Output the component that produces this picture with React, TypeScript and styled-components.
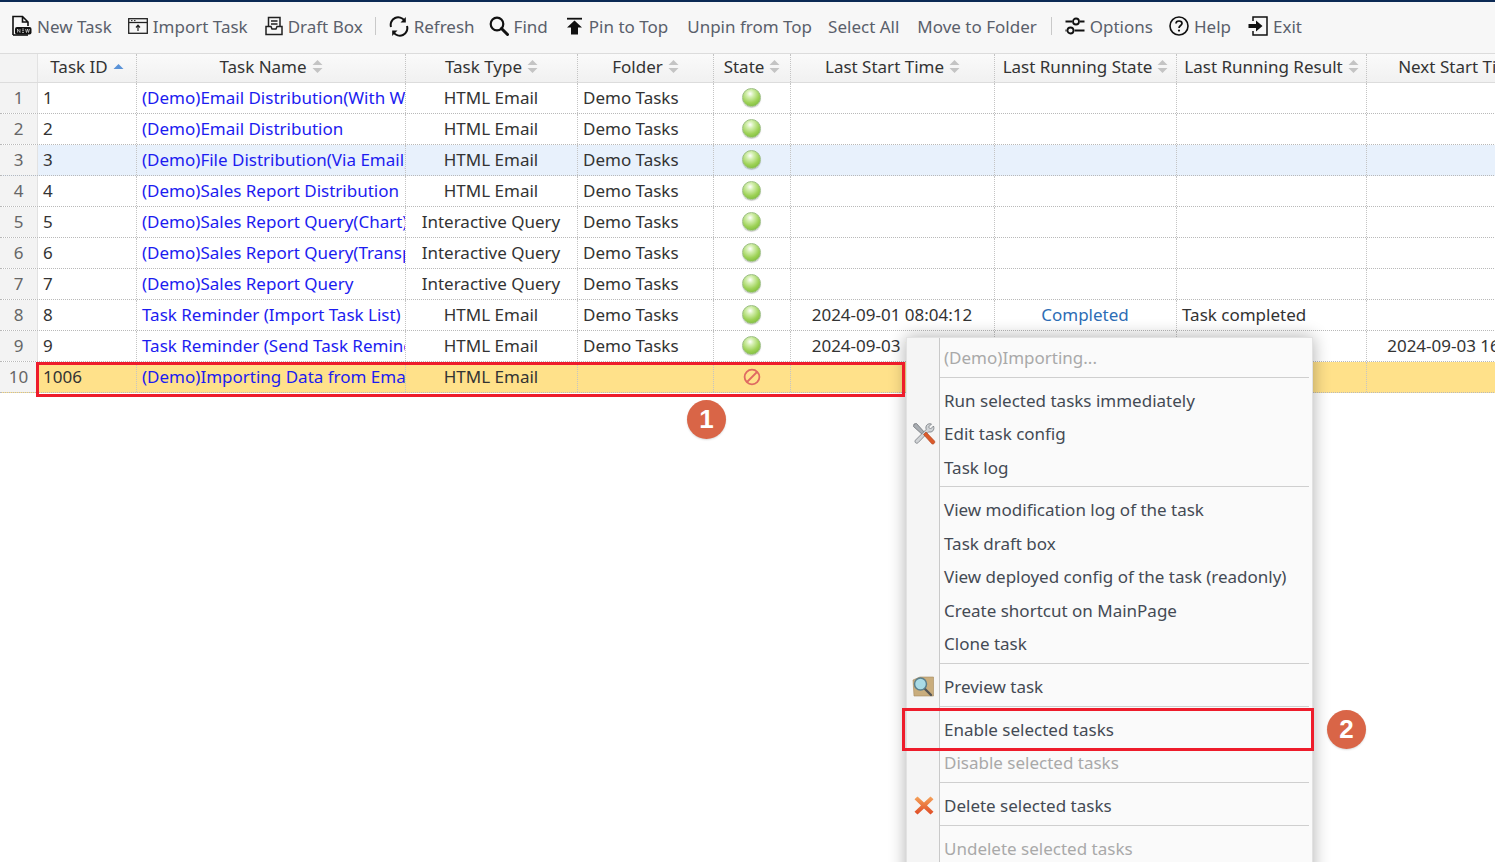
import React from 'react'
import styled, { createGlobalStyle } from 'styled-components'

const GlobalStyle = createGlobalStyle`
  html, body {
    margin: 0;
    padding: 0;
    overflow: hidden;
    background: #fff;
    font-family: "Noto Sans", "Open Sans", sans-serif;
  }
`

const COLUMNS = '38px 99px 269px 172px 136px 77px 204px 182px 190px 203px'

const Page = styled.div`
  position: relative;
  width: 1495px;
  height: 862px;
  overflow: hidden;
  border-top: 2px solid #0c2a55;
  box-sizing: border-box;
`

const Toolbar = styled.div`
  display: flex;
  align-items: center;
  height: 52px;
  padding: 0 0 3px 11px;
  background: #f7f7f7;
  border-bottom: 1px solid #dcdcdc;
  box-sizing: border-box;
`

const ToolButton = styled.div<{ $gap?: number }>`
  display: flex;
  align-items: center;
  gap: 5px;
  margin-right: ${p => p.$gap ?? 17}px;
  font-size: 17px;
  color: #5a606b;
  white-space: nowrap;
  svg {
    display: block;
    flex: none;
  }
`

const ToolDivider = styled.div`
  width: 1px;
  height: 18px;
  background: #c9c9c9;
  margin-right: 13px;
`

const Row = styled.div<{ $bg?: string }>`
  display: grid;
  grid-template-columns: ${COLUMNS};
  width: 1570px;
  height: 31px;
  box-sizing: border-box;
  border-bottom: 1px dotted #b9b9b9;
  background: ${p => p.$bg ?? '#fff'};
  font-size: 17px;
  color: #333;
`

const HeadRow = styled(Row)`
  height: 29px;
  background: linear-gradient(#fafafa, #f1f1f1);
  border-bottom: 1px solid #dcdcdc;
`

const HeadCell = styled.div`
  display: flex;
  align-items: center;
  justify-content: center;
  gap: 5px;
  padding-bottom: 3px;
  border-right: 1px dotted #c4c4c4;
  white-space: nowrap;
  overflow: hidden;
`

const NumCell = styled.div`
  display: flex;
  align-items: center;
  justify-content: center;
  padding-bottom: 2px;
  background: #f3f3f3;
  color: #666;
  border-right: 1px solid #e2e2e2;
`

const Cell = styled.div<{ $center?: boolean; $link?: boolean }>`
  display: flex;
  align-items: center;
  justify-content: ${p => (p.$center ? 'center' : 'flex-start')};
  padding: ${p => (p.$center ? '0 1px 2px 0' : '0 0 2px 5px')};
  border-right: 1px dotted #c4c4c4;
  color: ${p => (p.$link ? '#1c1cf0' : 'inherit')};
  white-space: nowrap;
  overflow: hidden;
  svg {
    margin-top: 2px;
  }
`

const StateLabel = styled.span`
  color: #2d6db5;
`

const GreenDot = styled.span`
  display: block;
  width: 19px;
  height: 19px;
  box-sizing: border-box;
  border-radius: 50%;
  border: 1px solid #9cbf83;
  background: radial-gradient(circle at 42% 28%, #ffffff 0%, #d4efb0 22%, #9ed257 58%, #6eb02f 100%);
  box-shadow: 0 1px 1px rgba(0, 0, 0, 0.2);
`

const Menu = styled.div`
  position: absolute;
  left: 906px;
  top: 335px;
  width: 407px;
  height: 600px;
  padding-top: 2.6px;
  box-sizing: border-box;
  background: linear-gradient(90deg, #f5f5f5 0, #f5f5f5 32px, #c9c9c9 32px, #c9c9c9 33px, #fafafa 33px);
  border: 1px solid #e2e2e2;
  box-shadow: 0 0 16px rgba(0, 0, 0, 0.32);
`

const MenuItem = styled.div<{ $off?: boolean }>`
  display: flex;
  align-items: center;
  height: 33.5px;
  font-size: 17px;
  color: ${p => (p.$off ? '#a9a9a9' : '#444a54')};
  white-space: nowrap;
`

const MenuIcon = styled.span`
  display: flex;
  align-items: center;
  justify-content: center;
  width: 33px;
  margin-right: 4px;
  flex: none;
`

const MenuLine = styled.div`
  height: 1px;
  margin: 2.5px 3px 5.75px 33px;
  background: #cfcfcf;
`

const Frame = styled.div<{ $x: number; $y: number; $w: number; $h: number }>`
  position: absolute;
  left: ${p => p.$x}px;
  top: ${p => p.$y}px;
  width: ${p => p.$w}px;
  height: ${p => p.$h}px;
  box-sizing: border-box;
  border: 3px solid #ee1c2b;
`

const Badge = styled.div<{ $x: number; $y: number }>`
  position: absolute;
  left: ${p => p.$x}px;
  top: ${p => p.$y}px;
  width: 39px;
  height: 39px;
  border-radius: 50%;
  background: #d96547;
  color: #fff;
  font-size: 26px;
  font-weight: 700;
  font-family: "Liberation Sans", sans-serif;
  display: flex;
  align-items: center;
  justify-content: center;
  box-shadow: 0 1px 2px rgba(0, 0, 0, 0.15);
`

const SortArrows = ({ up }: { up?: boolean }) =>
  up ? (
    <svg width="11" height="12" viewBox="0 0 11 12">
      <path d="M0.5 8 L5.5 3 L10.5 8 Z" fill="#5b93d8" />
    </svg>
  ) : (
    <svg width="11" height="15" viewBox="0 0 11 15">
      <path d="M0.5 6 L5.5 1 L10.5 6 Z M0.5 9 L5.5 14 L10.5 9 Z" fill="#c4c4c4" />
    </svg>
  )

const NewIcon = () => (
  <svg width="21" height="22" viewBox="0 0 21 22" fill="none">
    <path d="M2 20 V1.5 H11.5 L17 7 V11 M11.5 1.5 V7 H17" stroke="#111" strokeWidth="1.6" />
    <path d="M2 20 H17" stroke="#111" strokeWidth="1.6" />
    <rect x="4" y="12" width="16.5" height="7.5" rx="2" fill="#111" />
    <path d="M6.5 14 V17.5 M6.5 14 L9 17.5 V14 M11 14 H13 M11 15.7 H13 M11 17.5 H13 M14.5 14 L15.5 17.5 L16.5 14 L17.5 17.5 L18.5 14" stroke="#fff" strokeWidth="0.6" />
  </svg>
)

const ImportIcon = () => (
  <svg width="20" height="18" viewBox="0 0 20 18" fill="none">
    <rect x="0.7" y="1.7" width="18.6" height="14.6" stroke="#222" strokeWidth="1.3" />
    <path d="M1 5.5 H19" stroke="#222" strokeWidth="1.3" />
    <path d="M3 3.6 H4.5 M6 3.6 H7.5" stroke="#222" strokeWidth="1" />
    <path d="M10 14 V8.5 M8 10.5 L10 8.2 L12 10.5" stroke="#222" strokeWidth="1.2" />
  </svg>
)

const DraftIcon = () => (
  <svg width="18" height="20" viewBox="0 0 18 20" fill="none">
    <path d="M3.5 10 V1.5 H15 V10" stroke="#222" strokeWidth="1.5" />
    <path d="M6 5 H12.5 M6 8 H12.5" stroke="#222" strokeWidth="1.4" />
    <path d="M1 10.5 H6 L7 13 H11 L12 10.5 H17 V18.5 H1 Z" stroke="#222" strokeWidth="1.5" />
  </svg>
)

const RefreshIcon = () => (
  <svg width="20" height="21" viewBox="0 0 20 21" fill="none">
    <path d="M2 11 A7.5 7.5 0 0 1 15.5 4.8" stroke="#111" strokeWidth="2" />
    <path d="M18 10 A7.5 7.5 0 0 1 4.5 16.2" stroke="#111" strokeWidth="2" />
    <path d="M16.8 1 V6.6 H11.5 Z" fill="#111" />
    <path d="M3.2 20 V14.4 H8.5 Z" fill="#111" />
  </svg>
)

const FindIcon = () => (
  <svg width="20" height="20" viewBox="0 0 20 20" fill="none">
    <circle cx="8" cy="8" r="6.3" stroke="#111" strokeWidth="2.2" />
    <path d="M12.5 12.5 L18.5 18.5" stroke="#111" strokeWidth="3" strokeLinecap="round" />
  </svg>
)

const PinIcon = () => (
  <svg width="18" height="18" viewBox="0 0 18 18">
    <path d="M1 0.8 H16 V2.6 H1 Z" fill="#111" />
    <path d="M8.5 3.6 L16 10.4 H12 V17.5 H5 V10.4 H1 Z" fill="#111" />
  </svg>
)

const OptionsIcon = () => (
  <svg width="20" height="18" viewBox="0 0 20 18" fill="none">
    <path d="M0.5 4.5 H7 M15 4.5 H19.5 M0.5 13.5 H1.5 M9.5 13.5 H19.5" stroke="#111" strokeWidth="1.8" />
    <circle cx="11" cy="4.5" r="3" stroke="#111" strokeWidth="1.8" />
    <circle cx="5.5" cy="13.5" r="3" stroke="#111" strokeWidth="1.8" />
  </svg>
)

const HelpIcon = () => (
  <svg width="20" height="20" viewBox="0 0 20 20" fill="none">
    <circle cx="10" cy="10" r="9" stroke="#111" strokeWidth="1.6" />
    <path d="M7 7.6 C7 5.8 8.4 5 10 5 C11.7 5 13 6 13 7.4 C13 9.4 10 9.6 10 12" stroke="#111" strokeWidth="1.7" />
    <circle cx="10" cy="14.6" r="1.1" fill="#111" />
  </svg>
)

const ExitIcon = () => (
  <svg width="20" height="20" viewBox="0 0 20 20" fill="none">
    <path d="M5 5 V1 H19 V19 H5 V15" stroke="#111" strokeWidth="1.5" />
    <path d="M0.5 8 H8 V4.5 L14.5 10 L8 15.5 V12 H0.5 Z" fill="#111" />
  </svg>
)

const ForbidIcon = () => (
  <svg width="18" height="18" viewBox="0 0 18 18" fill="none">
    <circle cx="9" cy="9" r="7.4" stroke="#df6a62" strokeWidth="1.8" />
    <path d="M4 14 L14 4" stroke="#df6a62" strokeWidth="1.8" />
  </svg>
)

const ToolsIcon = () => (
  <svg width="24" height="24" viewBox="0 0 24 24" fill="none">
    <path d="M2 2 L4.5 1.5 L14 12 L12 14 L1.5 4.5 Z" fill="#a9adb2" stroke="#6d7176" strokeWidth="0.8" />
    <path d="M21.5 4 L18.5 7 L16.5 5 L19.5 2 C15.5 0.8 13 4 14.2 7.4 L3.6 18 C1.8 20 4.4 22.4 6.2 20.6 L16.6 9.8 C20 11 23 8 21.5 4 Z" fill="#d0d3d6" stroke="#74787d" strokeWidth="0.8" />
    <path d="M11.5 12.5 L14 10 L22.5 19 C23.6 20.4 21.4 23 19.8 21.8 Z" fill="#db5a2b" stroke="#a83c18" strokeWidth="0.6" />
  </svg>
)

const PreviewIcon = () => (
  <svg width="23" height="21" viewBox="0 0 23 21" fill="none">
    <path d="M1 4 L8 1 H21.5 V20 H2 Z" fill="#c9ad7d" stroke="#a58a5e" strokeWidth="0.6" />
    <path d="M12 12 L19 19" stroke="#555" strokeWidth="2.4" strokeLinecap="round" />
    <circle cx="8.5" cy="8" r="6" fill="#a9dbe6" stroke="#5b7f8c" strokeWidth="1.5" />
  </svg>
)

const DeleteIcon = () => (
  <svg width="20" height="19" viewBox="0 0 20 19">
    <defs>
      <linearGradient id="del" x1="0" y1="0" x2="0" y2="1">
        <stop offset="0" stopColor="#f5a35a" />
        <stop offset="1" stopColor="#df4a25" />
      </linearGradient>
    </defs>
    <path d="M3.5 0.5 L10 6.5 L16.5 0.5 L19.5 3.2 L13 9.5 L19.5 15.8 L16.5 18.5 L10 12.5 L3.5 18.5 L0.5 15.8 L7 9.5 L0.5 3.2 Z" fill="url(#del)" />
  </svg>
)

type Task = {
  id: string
  name: string
  type: string
  folder?: string
  state?: 'on' | 'off'
  start?: string
  running?: string
  result?: string
  next?: string
  bg?: string
}

const tasks: Task[] = [
  { id: '1', name: '(Demo)Email Distribution(With Workflow)', type: 'HTML Email' },
  { id: '2', name: '(Demo)Email Distribution', type: 'HTML Email' },
  { id: '3', name: '(Demo)File Distribution(Via Email)', type: 'HTML Email', bg: '#e8f1fc' },
  { id: '4', name: '(Demo)Sales Report Distribution', type: 'HTML Email' },
  { id: '5', name: '(Demo)Sales Report Query(Chart)', type: 'Interactive Query' },
  { id: '6', name: '(Demo)Sales Report Query(Transpose)', type: 'Interactive Query' },
  { id: '7', name: '(Demo)Sales Report Query', type: 'Interactive Query' },
  {
    id: '8',
    name: 'Task Reminder (Import Task List)',
    type: 'HTML Email',
    start: '2024-09-01 08:04:12',
    running: 'Completed',
    result: 'Task completed',
  },
  {
    id: '9',
    name: 'Task Reminder (Send Task Reminder)',
    type: 'HTML Email',
    start: '2024-09-03 16:00:00',
    next: '2024-09-03 16:30:00',
  },
]

const lastTask: Task = {
  id: '1006',
  name: '(Demo)Importing Data from Email',
  type: 'HTML Email',
  folder: '',
  state: 'off',
  bg: '#ffe18a',
}

const headers = [
  'Task Name',
  'Task Type',
  'Folder',
  'State',
  'Last Start Time',
  'Last Running State',
  'Last Running Result',
  'Next Start Time',
]

const TaskRow = ({ task, index }: { task: Task; index: number }) => (
  <Row $bg={task.bg}>
    <NumCell>{index}</NumCell>
    <Cell>{task.id}</Cell>
    <Cell $link>{task.name}</Cell>
    <Cell $center>{task.type}</Cell>
    <Cell>{task.folder ?? 'Demo Tasks'}</Cell>
    <Cell $center>{task.state === 'off' ? <ForbidIcon /> : <GreenDot />}</Cell>
    <Cell $center>{task.start}</Cell>
    <Cell $center>{task.running && <StateLabel>{task.running}</StateLabel>}</Cell>
    <Cell>{task.result}</Cell>
    <Cell $center>{task.next}</Cell>
  </Row>
)

export default function App() {
  return (
    <Page>
      <GlobalStyle />
      <Toolbar>
        <ToolButton $gap={16}><NewIcon />New Task</ToolButton>
        <ToolButton><ImportIcon />Import Task</ToolButton>
        <ToolButton $gap={12}><DraftIcon />Draft Box</ToolButton>
        <ToolDivider />
        <ToolButton $gap={14}><RefreshIcon />Refresh</ToolButton>
        <ToolButton $gap={18}><FindIcon />Find</ToolButton>
        <ToolButton $gap={19}><PinIcon />Pin to Top</ToolButton>
        <ToolButton $gap={16}>Unpin from Top</ToolButton>
        <ToolButton $gap={18}>Select All</ToolButton>
        <ToolButton $gap={14}>Move to Folder</ToolButton>
        <ToolDivider />
        <ToolButton $gap={16}><OptionsIcon />Options</ToolButton>
        <ToolButton><HelpIcon />Help</ToolButton>
        <ToolButton><ExitIcon />Exit</ToolButton>
      </Toolbar>

      <HeadRow>
        <NumCell />
        <HeadCell>Task ID <SortArrows up /></HeadCell>
        {headers.map(h => (
          <HeadCell key={h}>{h} <SortArrows /></HeadCell>
        ))}
      </HeadRow>
      {tasks.map((t, i) => (
        <TaskRow key={t.id} task={t} index={i + 1} />
      ))}
      <TaskRow task={lastTask} index={10} />

      <Menu>
        <MenuItem $off><MenuIcon />(Demo)Importing...</MenuItem>
        <MenuLine />
        <MenuItem><MenuIcon />Run selected tasks immediately</MenuItem>
        <MenuItem><MenuIcon><ToolsIcon /></MenuIcon>Edit task config</MenuItem>
        <MenuItem><MenuIcon />Task log</MenuItem>
        <MenuLine />
        <MenuItem><MenuIcon />View modification log of the task</MenuItem>
        <MenuItem><MenuIcon />Task draft box</MenuItem>
        <MenuItem><MenuIcon />View deployed config of the task (readonly)</MenuItem>
        <MenuItem><MenuIcon />Create shortcut on MainPage</MenuItem>
        <MenuItem><MenuIcon />Clone task</MenuItem>
        <MenuLine />
        <MenuItem><MenuIcon><PreviewIcon /></MenuIcon>Preview task</MenuItem>
        <MenuLine />
        <MenuItem><MenuIcon />Enable selected tasks</MenuItem>
        <MenuItem $off><MenuIcon />Disable selected tasks</MenuItem>
        <MenuLine />
        <MenuItem><MenuIcon><DeleteIcon /></MenuIcon>Delete selected tasks</MenuItem>
        <MenuLine />
        <MenuItem $off><MenuIcon />Undelete selected tasks</MenuItem>
      </Menu>

      <Frame $x={36} $y={360} $w={869} $h={35} />
      <Frame $x={902} $y={706} $w={412} $h={43} />
      <Badge $x={687} $y={398}>1</Badge>
      <Badge $x={1327} $y={708}>2</Badge>
    </Page>
  )
}
